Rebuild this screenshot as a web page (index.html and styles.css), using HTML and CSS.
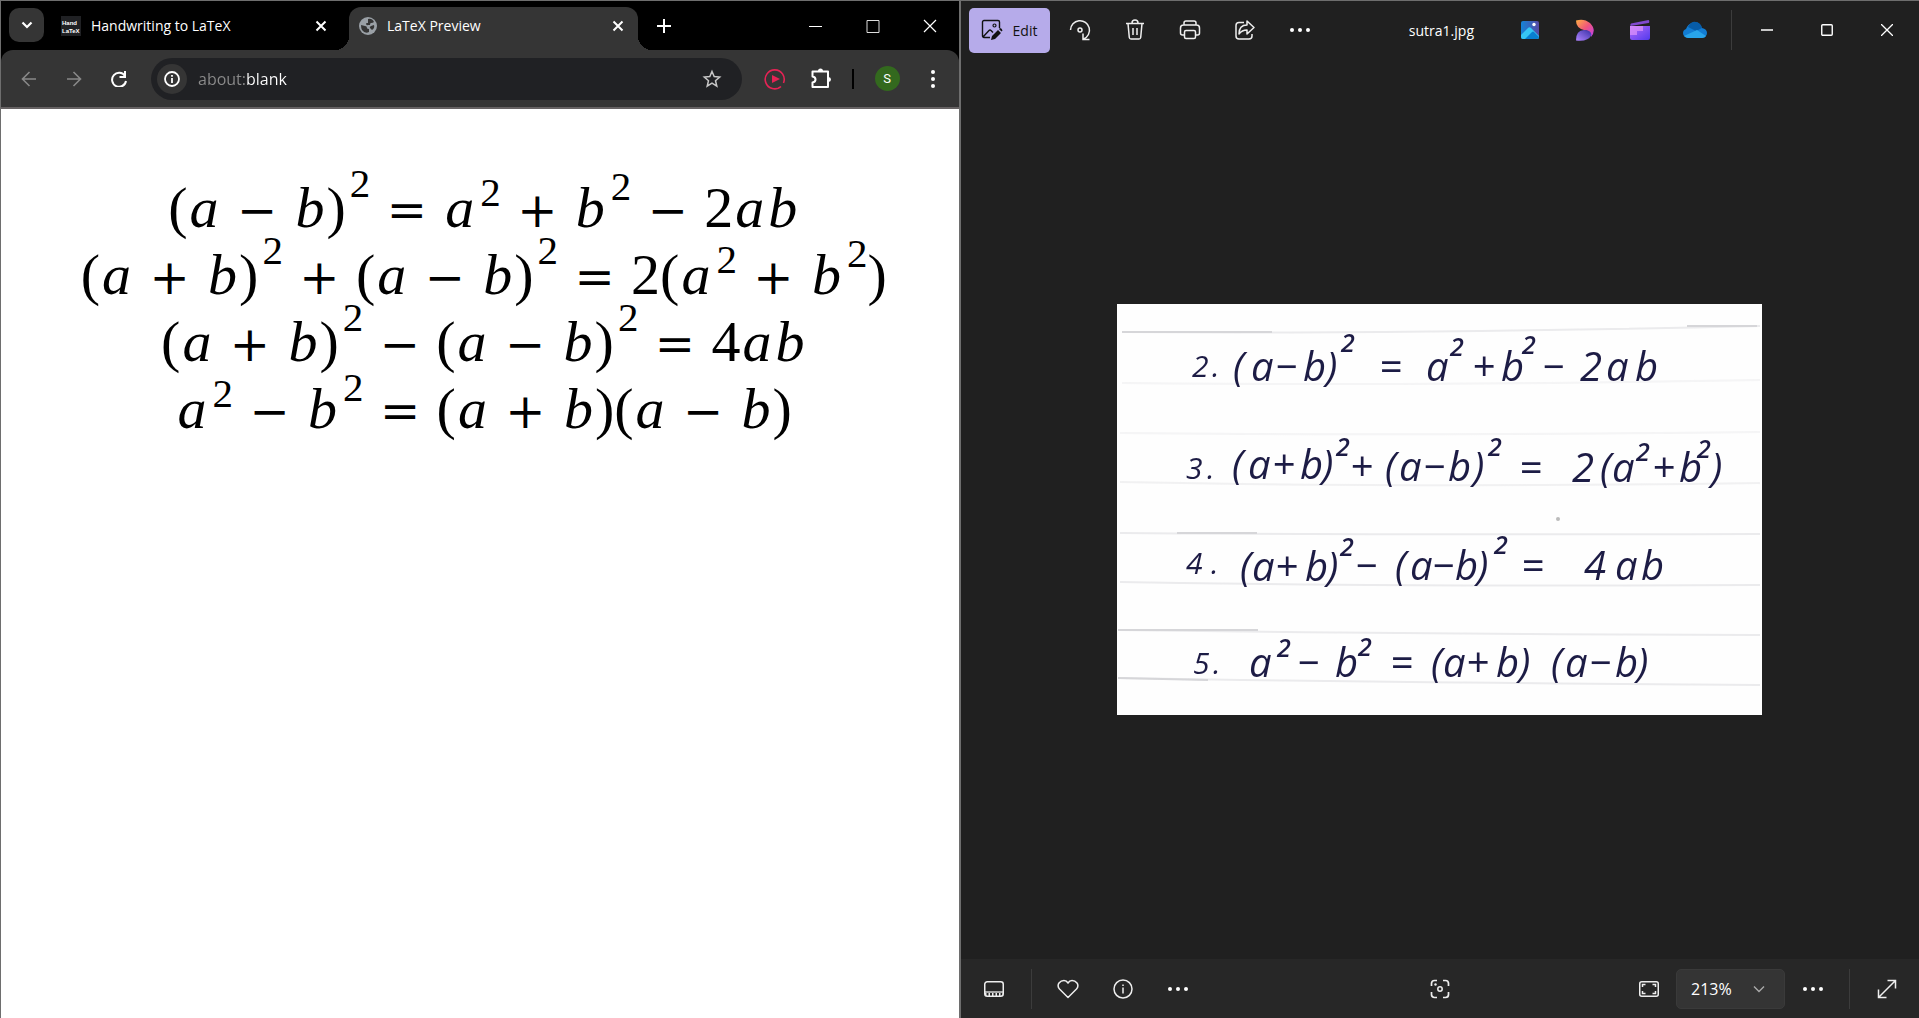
FILE: index.html
```html
<!DOCTYPE html>
<html lang="en">
<head>
<meta charset="utf-8">
<title>LaTeX Preview</title>
<link rel="stylesheet" href="styles.css">
</head>
<body>
<main class="desktop">
  <section class="browser" aria-label="Browser">
    <header class="tabstrip">
      <button class="tab-search" aria-label="Search tabs"><svg width="12" height="8" viewBox="0 0 12 8"><path d="M1.500 1.500 6 6l4.500-4.500" fill="none" stroke="#fff" stroke-width="2.200"/></svg></button>
      <div class="tab">
        <svg class="favicon" width="20" height="20" viewBox="0 0 20 20" aria-hidden="true"><rect width="20" height="20" fill="#202124"/><text x="1" y="9" class="favicon-text">Hand</text><text x="1" y="17" class="favicon-text">LaTeX</text></svg>
        <span class="tab-title">Handwriting to LaTeX</span>
        <button class="tab-close" aria-label="Close tab"><svg width="12" height="12" viewBox="0 0 12 12"><path d="M1.500 1.500l9 9m0-9l-9 9" stroke="#fff" stroke-width="2"/></svg></button>
      </div>
      <div class="tab tab-active">
        <svg class="favicon" width="18" height="18" viewBox="0 0 18 18" aria-hidden="true"><circle cx="9" cy="9" r="9" fill="#9aa0a6"/><path d="M2 8l4 1q2 0 2 2 0 1 2 1v3q-4 2-7-2-1-2-1-5zM9 2q4-1 6 3-1 1-3 1-1 0-1 2H9q-1 1-2-1 0-1 1-1h1zM15 8q1 3-2 5l-2-2q-1-1 1-2z" fill="#353535"/></svg>
        <span class="tab-title">LaTeX Preview</span>
        <button class="tab-close" aria-label="Close tab"><svg width="12" height="12" viewBox="0 0 12 12"><path d="M1.500 1.500l9 9m0-9l-9 9" stroke="#fff" stroke-width="2"/></svg></button>
      </div>
      <button class="new-tab" aria-label="New tab"><svg width="14" height="14" viewBox="0 0 14 14"><path d="M7 0v14M0 7h14" stroke="#fff" stroke-width="2"/></svg></button>
      <div class="window-controls">
        <button aria-label="Minimize"><svg width="14" height="14" viewBox="0 0 14 14"><path d="M0 7.500h13" stroke="#fff"/></svg></button>
        <button aria-label="Maximize"><svg width="14" height="14" viewBox="0 0 14 14"><path d="M1 1.500h12v12H1z" fill="none" stroke="#ddd"/></svg></button>
        <button aria-label="Close"><svg width="14" height="14" viewBox="0 0 14 14"><path d="M1 1l12 12m0-12L1 13" stroke="#fff" stroke-width="1.200"/></svg></button>
      </div>
    </header>
    <div class="toolbar">
      <nav class="nav-buttons">
        <button aria-label="Back"><svg width="16" height="16" viewBox="0 0 16 16"><path d="M15 8H2m6.500-7L1.500 8l7 7" fill="none" stroke="#888" stroke-width="1.600"/></svg></button>
        <button aria-label="Forward"><svg width="16" height="16" viewBox="0 0 16 16"><path d="M1 8h13M7.500 1l7 7-7 7" fill="none" stroke="#888" stroke-width="1.600"/></svg></button>
        <button aria-label="Reload"><svg width="16" height="16" viewBox="0 0 16 16"><path d="M14 5A7 7 0 1 0 15 10" fill="none" stroke="#fff" stroke-width="2"/><path d="M15 0v7H8.500V5H13V0z" fill="#fff"/></svg></button>
      </nav>
      <div class="omnibox">
        <button class="site-info" aria-label="Site information"><svg width="16" height="16" viewBox="0 0 16 16"><circle cx="8" cy="8" r="7" fill="none" stroke="#fff" stroke-width="1.800"/><path d="M8 7v5M8 4v1.800" stroke="#fff" stroke-width="1.800"/></svg></button>
        <input class="address" type="text" aria-label="Address" value="about:blank">
        <button class="bookmark" aria-label="Bookmark this tab"><svg width="20" height="20" viewBox="0 0 20 20"><path d="M10 2.500l2.200 5.100 5.500.5-4.200 3.600 1.300 5.400-4.800-2.900-4.800 2.900 1.300-5.400-4.200-3.600 5.500-.5z" fill="none" stroke="#c7c7c7" stroke-width="1.500"/></svg></button>
      </div>
      <div class="extensions">
        <button class="ext" aria-label="Video extension"><svg width="22" height="22" viewBox="0 0 22 22"><path d="M17 18.500A9.500 9.500 0 1 1 19.500 15M14.500 20l2-1" fill="none" stroke="#e62355" stroke-width="1.600"/><path d="M8 7v8l8-4z" fill="#e62355"/></svg></button>
        <button class="ext" aria-label="Extensions"><svg width="22" height="22" viewBox="0 0 22 22"><path d="M2.500 3.500H18V19H2.500v-4.500q3-.5 3-3t-3-3z" fill="none" stroke="#fff" stroke-width="2" stroke-linejoin="round"/><path d="M8 3a2.500 2.500 0 0 1 5 0zM18.500 9a2.500 2.500 0 0 1 0 5z" fill="#fff"/></svg></button>
        <span class="ext-divider"></span>
        <button class="avatar" aria-label="Profile">S</button>
        <button class="menu" aria-label="Menu"><svg width="6" height="20" viewBox="0 0 6 20"><g fill="#fff"><circle cx="3" cy="3" r="2"/><circle cx="3" cy="10" r="2"/><circle cx="3" cy="17" r="2"/></g></svg></button>
      </div>
    </div>
    <article class="preview">
      <p class="equation">(<i>a</i><span class="op">−</span><i>b</i>)<sup class="group">2</sup><span class="op">=</span><i>a</i><sup>2</sup><span class="op">+</span><i>b</i><sup class="tall">2</sup><span class="op">−</span>2<i>a</i><i>b</i></p>
      <p class="equation">(<i>a</i><span class="op">+</span><i>b</i>)<sup class="group">2</sup><span class="op">+</span>(<i>a</i><span class="op">−</span><i>b</i>)<sup class="group">2</sup><span class="op">=</span>2(<i>a</i><sup>2</sup><span class="op">+</span><i>b</i><sup class="tall">2</sup>)</p>
      <p class="equation">(<i>a</i><span class="op">+</span><i>b</i>)<sup class="group">2</sup><span class="op">−</span>(<i>a</i><span class="op">−</span><i>b</i>)<sup class="group">2</sup><span class="op">=</span>4<i>a</i><i>b</i></p>
      <p class="equation"><i>a</i><sup>2</sup><span class="op">−</span><i>b</i><sup class="tall">2</sup><span class="op">=</span>(<i>a</i><span class="op">+</span><i>b</i>)(<i>a</i><span class="op">−</span><i>b</i>)</p>
    </article>
  </section>

  <section class="photos" aria-label="Photos">
    <header class="photo-bar">
      <button class="edit"><svg width="22" height="22" viewBox="0 0 22 22"><path d="M9 18.500H3a1.500 1.500 0 0 1-1.500-1.500V3A1.500 1.500 0 0 1 3 1.500h14A1.500 1.500 0 0 1 18.500 3v6M2 18l6-6.500q1-1 2 0l2 2" fill="none" stroke="#111" stroke-width="1.400"/><circle cx="13.500" cy="6.500" r="1.500" fill="none" stroke="#111" stroke-width="1.200"/><path d="M10 21l1-4 6-6 3 3-6 6zM18 10l1-1q2 0 2.500 2.500l-1 1z" fill="#111"/></svg>Edit</button>
      <button class="tool" aria-label="Rotate"><svg width="22" height="22" viewBox="0 0 22 22"><path d="M1.500 11a9.500 9.500 0 1 1 13 9M14 14.500V20.500h6.500" fill="none" stroke="#eee" stroke-width="1.500"/><circle cx="11" cy="11" r="2" fill="none" stroke="#eee" stroke-width="1.500"/></svg></button>
      <button class="tool" aria-label="Delete"><svg width="20" height="22" viewBox="0 0 20 22"><path d="M1 4.500h18M3 4.500l1.300 14q.2 1.500 1.700 1.500h8q1.500 0 1.700-1.500L17 4.500M7 4a3 3 0 0 1 6 0M8 9v7M12 9v7" fill="none" stroke="#eee" stroke-width="1.500"/></svg></button>
      <button class="tool" aria-label="Print"><svg width="22" height="22" viewBox="0 0 22 22"><path d="M5.500 16H3.500Q1.500 16 1.500 14V9q0-3 3-3h13q3 0 3 3v5q0 2-2 2h-2M5 6V4q0-2 2-2h8q2 0 2 2v2" fill="none" stroke="#eee" stroke-width="1.500"/><rect x="5.500" y="11.500" width="11" height="8" rx="1.500" fill="none" stroke="#eee" stroke-width="1.500"/></svg></button>
      <button class="tool" aria-label="Share"><svg width="22" height="22" viewBox="0 0 22 22"><path d="M10 3.500H5Q2 3.500 2 6.500V17q0 3 3 3h10q3 0 3-3v-2M13 2l7 6.500-7 6.500v-4q-5 0-8 4 0-9 8-9z" fill="none" stroke="#eee" stroke-width="1.500" stroke-linejoin="round"/></svg></button>
      <button class="tool" aria-label="More"><svg width="22" height="6" viewBox="0 0 22 6"><g fill="#fff"><circle cx="3" cy="3" r="2"/><circle cx="11" cy="3" r="2"/><circle cx="19" cy="3" r="2"/></g></svg></button>
      <h1 class="file-name">sutra1.jpg</h1>
      <div class="apps">
        <button aria-label="Photos"><svg width="18" height="18" viewBox="0 0 18 18"><defs><linearGradient id="ph" x1="0" x2="1"><stop stop-color="#1583d8"/><stop offset="1" stop-color="#5749a4"/></linearGradient></defs><rect width="18" height="18" rx="2" fill="url(#ph)"/><path d="M0 14l7-7q1.500-1.500 3 0l8 8v1q0 2-2 2H2q-2 0-2-2z" fill="#36c6f4"/><path d="M4 18l7-7q1-1 2 0l5 5q0 2-2 2z" fill="#087fd1"/><circle cx="13" cy="3.500" r="1.700" fill="#fff"/></svg></button>
        <button aria-label="Designer"><svg width="18" height="22" viewBox="0 0 18 22"><defs><linearGradient id="d1" x1="0" x2="1" y2="1"><stop stop-color="#ffb040"/><stop offset=".5" stop-color="#f0567c"/><stop offset="1" stop-color="#bd3df0"/></linearGradient><linearGradient id="d2" y1="1" x2="1" y2="0"><stop stop-color="#b083ff"/><stop offset="1" stop-color="#3730a5"/></linearGradient></defs><path d="M0 1.500Q8-1 14 4q7 7 1 14-1-7-7-7-8-2-8-9.500z" fill="url(#d1)"/><path d="M0 21.500q0-10.500 8-10.500 7 0 7.500 5-3.500 7-15.500 5.500z" fill="url(#d2)"/></svg></button>
        <button aria-label="Clipchamp"><svg width="20" height="22" viewBox="0 0 20 22"><defs><linearGradient id="cl" x1="0" x2="1" y2="1"><stop stop-color="#b56cfa"/><stop offset="1" stop-color="#5139ed"/></linearGradient></defs><path d="M1 4.500Q0 5 .5 7l18-3q.8 0 .8-1.500T18.500 1z" fill="#8149d0"/><path d="M0 7h20v12q0 2-2 2H2q-2 0-2-2z" fill="url(#cl)"/><path d="M0 7h13v5H7v4H0z" fill="#e094fb" opacity=".7"/></svg></button>
        <button aria-label="OneDrive"><svg width="24" height="18" viewBox="0 0 24 18"><path d="M3 8Q5 3 9 2q7-3 10 5 5 1 5 5t-5 5H5q-5-1-5-5 0-3 3-4z" fill="#127cd2"/><path d="M5 6q3-6 8-5 5 1 6 6l-6 3z" fill="#075ca8"/><path d="M1 15l13-6 9 6q-1 2-4 2H5q-2 0-4-2z" fill="#28a4ea"/></svg></button>
      </div>
      <span class="bar-divider"></span>
      <div class="photo-controls">
        <button aria-label="Minimize"><svg width="12" height="12" viewBox="0 0 12 12"><path d="M0 6h12" stroke="#fff" stroke-width="1.500"/></svg></button>
        <button aria-label="Maximize"><svg width="12" height="12" viewBox="0 0 12 12"><rect x=".75" y=".75" width="10.500" height="10.500" rx="1" fill="none" stroke="#fff" stroke-width="1.400"/></svg></button>
        <button aria-label="Close"><svg width="12" height="12" viewBox="0 0 12 12"><path d="M0 0l12 12m0-12L0 12" stroke="#fff" stroke-width="1.300"/></svg></button>
      </div>
    </header>

    <div class="stage">
      <svg class="photo" viewBox="0 0 645 411" role="img" aria-label="Handwritten identities on ruled paper">
        <defs><filter id="soft"><feGaussianBlur stdDeviation=".6"/></filter></defs>
        <rect width="645" height="411" fill="#fefefe"/>
        <g fill="none" stroke="#ebebed" stroke-width="2" filter="url(#soft)">
          <path d="M5 28Q300 30 643 22"/><path d="M5 79Q300 82 643 76" opacity=".5"/>
          <path d="M3 129Q300 132 643 128" opacity=".5"/><path d="M3 178Q300 184 643 179" opacity=".7"/>
          <path d="M3 229Q300 231 643 230"/><path d="M3 278Q300 283 643 281"/>
          <path d="M1 326Q300 330 643 331"/><path d="M1 374Q300 379 643 381"/>
          <path d="M5 28h150M1 326h140M1 374l90 2M570 22h70M60 229h80" stroke="#d6d6d9"/>
        </g>
        <circle cx="441" cy="215" r="2" fill="#bbb"/>
        <g class="ink" filter="url(#soft)">
          <text class="num" x="75 95" y="73">2.</text>
          <text x="116 134 158 186 209" y="77">(a−b)</text><text class="pow" x="224" y="48">2</text>
          <text x="262 309" y="77">=a</text><text class="pow" x="333" y="52">2</text>
          <text x="355 384" y="77">+b</text><text class="pow" x="405" y="50">2</text>
          <text x="425 463 489 518" y="77">−2ab</text>

          <text class="num" x="69 90" y="175">3.</text>
          <text x="115 131 155 183 205" y="175">(a+b)</text><text class="pow" x="219" y="152">2</text>
          <text x="233 268 282 306 331 356" y="177">+(a−b)</text><text class="pow" x="371" y="152">2</text>
          <text x="402 455 483 495" y="178">=2(a</text><text class="pow" x="519" y="157">2</text>
          <text x="535 562" y="178">+b</text><text class="pow" x="580" y="154">2</text><text x="594" y="178">)</text>

          <text class="num" x="69 94" y="270">4.</text>
          <text x="123 135 158 188 210" y="277">(a+b)</text><text class="pow" x="223" y="252">2</text>
          <text x="238 278 293 315 338 360" y="276">−(a−b)</text><text class="pow" x="377" y="250">2</text>
          <text x="404 467 498 524" y="276">=4ab</text>

          <text class="num" x="76 96" y="370">5.</text>
          <text x="132" y="373">a</text><text class="pow" x="160" y="353">2</text>
          <text x="180 218" y="373">−b</text><text class="pow" x="241" y="352">2</text>
          <text x="273 314 326 349 379 402 434 448 472 498 520" y="373">=(a+b)(a−b)</text>
        </g>
      </svg>
    </div>

    <footer class="status-bar">
      <div class="status-group">
        <button class="tool" aria-label="Filmstrip"><svg width="20" height="18" viewBox="0 0 20 18"><rect x=".75" y="1.750" width="18.500" height="14.500" rx="2.500" fill="none" stroke="#eee" stroke-width="1.500"/><path d="M1 12h18" stroke="#eee" stroke-width="1.300"/><path d="M1 14.500h18" stroke="#eee" stroke-width="3" stroke-dasharray="1.500 2"/></svg></button>
        <span class="bar-divider"></span>
        <button class="tool" aria-label="Favorite"><svg width="22" height="20" viewBox="0 0 22 20"><path d="M11 18.500l-8.500-8.500Q0 7 2 4q2-2.500 5-2.500 2.500 0 4 2.500 1.500-2.500 4-2.500 3 0 5 2.500 2 3-.5 6z" fill="none" stroke="#eee" stroke-width="1.500" stroke-linejoin="round"/></svg></button>
        <button class="tool" aria-label="File info"><svg width="20" height="20" viewBox="0 0 20 20"><circle cx="10" cy="10" r="9" fill="none" stroke="#eee" stroke-width="1.500"/><path d="M10 8.500v6M10 5.500v1.500" stroke="#eee" stroke-width="1.500"/></svg></button>
        <button class="tool" aria-label="More options"><svg width="22" height="6" viewBox="0 0 22 6"><g fill="#fff"><circle cx="3" cy="3" r="2"/><circle cx="11" cy="3" r="2"/><circle cx="19" cy="3" r="2"/></g></svg></button>
      </div>
      <button class="tool" aria-label="Visual search"><svg width="20" height="20" viewBox="0 0 20 20"><path d="M1.500 7V4.500q0-3 3-3H7m6 0h2.500q3 0 3 3V7m0 6v2.500q0 3-3 3H13m-6 0H4.500q-3 0-3-3V13" fill="none" stroke="#eee" stroke-width="1.700"/><circle cx="10" cy="10" r="2.200" fill="none" stroke="#eee" stroke-width="1.500"/><circle cx="5.500" cy="5.500" r="1.200" fill="#eee"/></svg></button>
      <div class="status-group status-end">
        <button class="tool" aria-label="Zoom to fit"><svg width="20" height="16" viewBox="0 0 20 16"><rect x=".75" y=".75" width="18.500" height="14.500" rx="2" fill="none" stroke="#eee" stroke-width="1.500"/><path d="M3.500 6V3.500H6.500M13.500 3.500h3V6M16.500 10v2.500h-3M6.500 12.500h-3V10" fill="none" stroke="#eee" stroke-width="1.500"/></svg></button>
        <div class="zoom-box">
          <select class="zoom" aria-label="Zoom level"><option>213%</option></select>
          <svg class="zoom-arrow" width="12" height="8" viewBox="0 0 12 8" aria-hidden="true"><path d="M1 1.500l5 5 5-5" fill="none" stroke="#aaa" stroke-width="1.400"/></svg>
        </div>
        <button class="tool" aria-label="More zoom options"><svg width="22" height="6" viewBox="0 0 22 6"><g fill="#fff"><circle cx="3" cy="3" r="2"/><circle cx="11" cy="3" r="2"/><circle cx="19" cy="3" r="2"/></g></svg></button>
        <span class="bar-divider"></span>
        <button class="tool" aria-label="Full screen"><svg width="20" height="20" viewBox="0 0 20 20"><path d="M1.500 18.500l17-17M10.500 1.500h8v8M1.500 10.500v8h8" fill="none" stroke="#eee" stroke-width="1.500"/></svg></button>
      </div>
    </footer>
  </section>
</main>
</body>
</html>
```
FILE: styles.css
```css
* { box-sizing: border-box; }

body {
  margin: 0;
  background: #202020;
  font-family: "Open Sans", "Noto Sans", sans-serif;
  font-size: 14px;
  color: #fff;
}

button {
  display: flex;
  align-items: center;
  justify-content: center;
  flex: none;
  padding: 0;
  border: 0;
  background: none;
  color: inherit;
  font: inherit;
}

svg { display: block; flex: none; }

.desktop {
  display: grid;
  grid-template-columns: 1fr 1fr;
  min-height: 100vh;
}

/* Browser window */
.browser {
  display: flex;
  flex-direction: column;
  min-width: 0;
  border: 1px solid #6e6e6e;
  border-bottom: 0;
  background: #000;
}

.tabstrip {
  display: flex;
  height: 49px;
  padding: 6px 0 0 8px;
}

.tab-search {
  width: 35px;
  height: 34px;
  margin-top: 1px;
  border-radius: 10px;
  background: #353535;
}

.tab {
  display: flex;
  align-items: center;
  width: 289px;
  height: 43px;
  padding: 0 10px 6px;
  gap: 10px;
}

.tab:not(.tab-active) {
  margin: 0 8px 0 7px;
  width: 290px;
}

.tab-title { flex: 1; white-space: nowrap; }
.tab-close { width: 20px; height: 20px; }

.tab-active {
  position: relative;
  border-radius: 12px 12px 0 0;
  background: #353535;
}

.tab-active::before,
.tab-active::after {
  content: "";
  position: absolute;
  bottom: 0;
  width: 14px;
  height: 14px;
}

.tab-active::before {
  right: 100%;
  background: radial-gradient(circle at 0 0, transparent 14px, #353535 14px);
}

.tab-active::after {
  left: 100%;
  background: radial-gradient(circle at 100% 0, transparent 14px, #353535 14px);
}

.favicon-text {
  font: bold 6px "Liberation Sans", sans-serif;
  fill: #fff;
}

.new-tab { width: 52px; height: 37px; }

.window-controls {
  display: flex;
  margin-left: auto;
  height: 37px;
}

.window-controls button { width: 57px; }

.toolbar {
  display: flex;
  align-items: center;
  height: 59px;
  border-bottom: 2px solid #666263;
  border-radius: 12px 12px 0 0;
  background: #353535;
}

.nav-buttons { display: flex; padding: 0 10px 0 5px; }
.nav-buttons button { width: 45px; height: 40px; }

.omnibox {
  display: flex;
  align-items: center;
  flex: 1;
  height: 42px;
  padding: 0 20px 0 6px;
  border-radius: 21px;
  background: #202124;
}

.site-info {
  width: 30px;
  height: 30px;
  border-radius: 50%;
  background: #353535;
}

.address {
  flex: 1;
  min-width: 0;
  height: 30px;
  padding: 0 0 0 11px;
  border: 0;
  outline: 0;
  background: linear-gradient(90deg, #8b8b8b 60px, #fff 60px);
  background-clip: text;
  -webkit-background-clip: text;
  color: transparent;
  font: 16px "Open Sans", sans-serif;
}

.extensions {
  display: flex;
  align-items: center;
  padding: 0 18px 0 22px;
}

.ext { width: 22px; height: 30px; margin-right: 24px; }
.ext-divider { width: 2px; height: 20px; margin: 0 21px 0 -4px; background: #000; }

.avatar {
  width: 25px;
  height: 25px;
  margin-right: 25px;
  border-radius: 50%;
  background: #33691e;
  font: 13px Roboto, sans-serif;
}

.menu { width: 16px; height: 30px; }

.preview {
  flex: 1;
  padding: 65px 0 0 8px;
  background: #fff;
  color: #000;
}

.equation {
  margin: 0;
  text-align: center;
  white-space: nowrap;
  font: 58px/67px "Liberation Serif", serif;
}

.equation i { padding: 0 2px; }

.op {
  display: inline-block;
  width: 73px;
  font: 48px/50px "DejaVu Serif", serif;
}

.equation sup {
  padding-left: 4px;
  font-size: 41px;
  line-height: 0;
  vertical-align: 21px;
}

.equation .tall { vertical-align: 27px; }
.equation .group { vertical-align: 30px; }

/* Photo viewer window */
.photos {
  display: flex;
  flex-direction: column;
  min-width: 0;
  border: 1px solid #6e6e6e;
  border-width: 1px 0 0 1px;
  background: #202020;
}

.photo-bar {
  display: flex;
  align-items: center;
  height: 58px;
  padding: 0 2px 0 8px;
}

.edit {
  width: 81px;
  height: 45px;
  margin-right: 3px;
  gap: 10px;
  border-radius: 5px;
  background: #b6abea;
  color: #111;
}

.tool { width: 55px; height: 40px; }

.file-name {
  flex: 1;
  margin: 0;
  padding-right: 28px;
  text-align: right;
  font-size: 14px;
  font-weight: 400;
}

.apps { display: flex; }
.apps button { width: 55px; height: 40px; }

.bar-divider {
  flex: none;
  width: 1px;
  height: 40px;
  margin: 0 9px;
  background: #3c3c3c;
}

.photo-bar .bar-divider { margin-right: 5px; }

.photo-controls { display: flex; }
.photo-controls button { width: 60px; height: 40px; }

.stage {
  display: flex;
  align-items: center;
  justify-content: center;
  flex: 1;
}

.photo { width: 68%; max-width: 645px; height: auto; }

.ink text {
  font: italic 500 40px "Open Sans", sans-serif;
  fill: #1f1b45;
}

.ink .num { font-size: 30px; }
.ink .pow { font-size: 25px; font-weight: 600; }

.status-bar {
  display: grid;
  grid-template-columns: 1fr auto 1fr;
  align-items: center;
  height: 59px;
  padding: 0 5px 0 6px;
  background: #272727;
}

.status-group { display: flex; align-items: center; }
.status-end { justify-content: flex-end; }

.zoom-box { position: relative; }

.zoom {
  appearance: none;
  display: block;
  width: 109px;
  height: 40px;
  padding: 0 14px;
  border: 1px solid #3a3a3a;
  border-radius: 5px;
  background: #343434;
  color: #fff;
  font: 16px "Open Sans", sans-serif;
}

.zoom-arrow {
  position: absolute;
  top: 16px;
  right: 20px;
  pointer-events: none;
}
```
